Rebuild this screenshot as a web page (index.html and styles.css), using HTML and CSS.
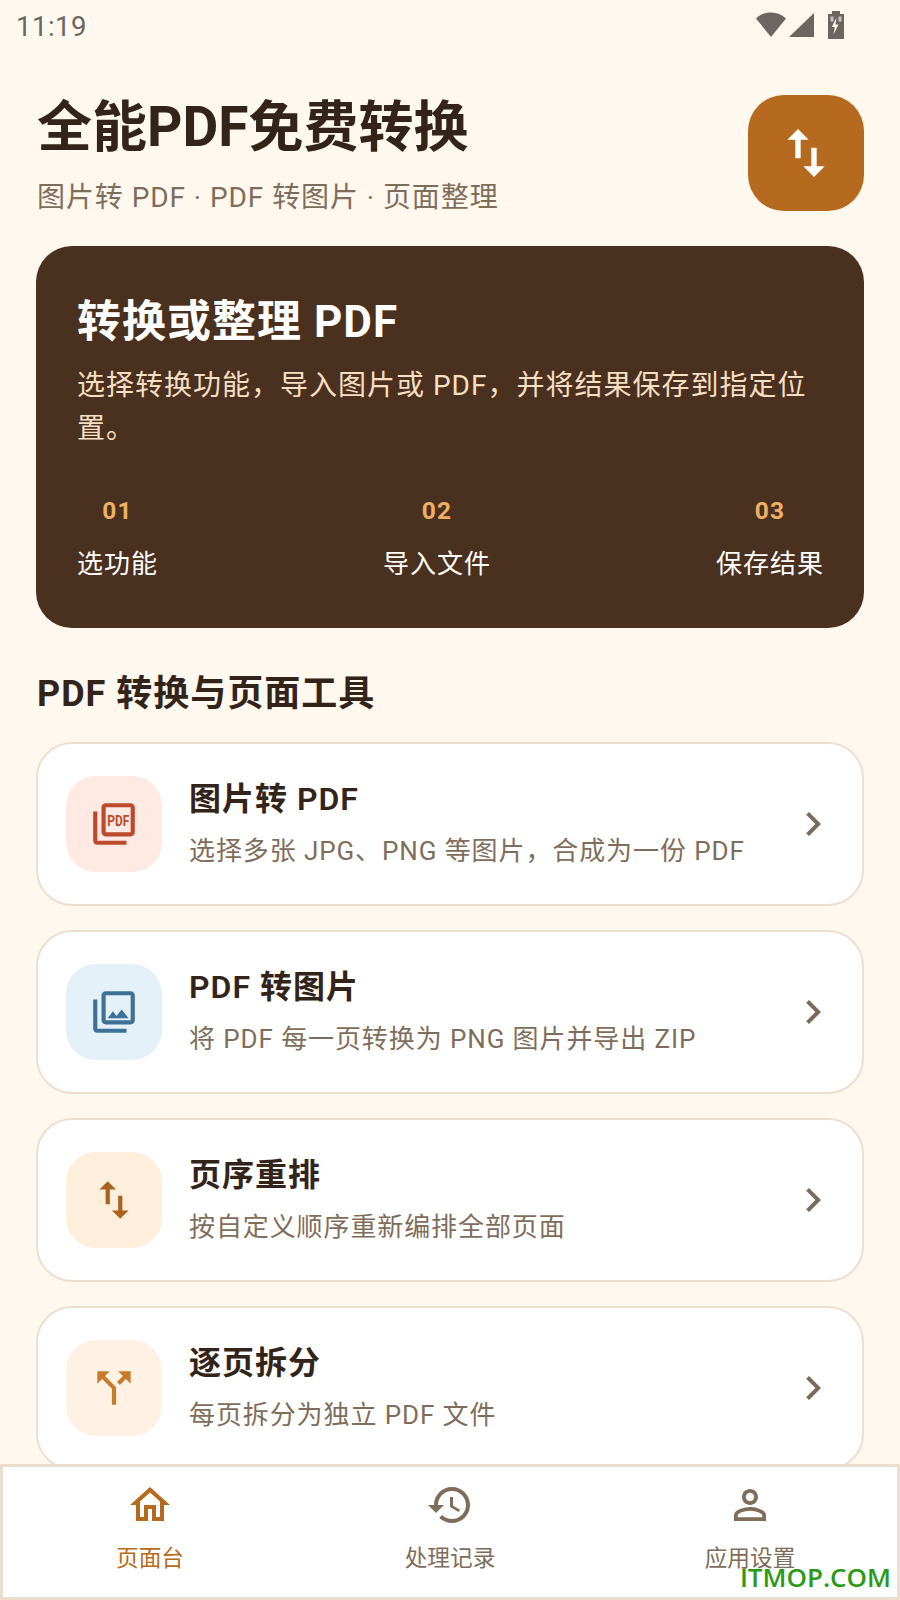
FILE: index.html
```html
<!DOCTYPE html>
<html lang="zh-CN">
<head>
    <meta charset="UTF-8">
    <meta name="viewport" content="width=device-width, initial-scale=1.0">
    <title>全能PDF免费转换</title>
    <link rel="stylesheet" href="styles.css">
</head>
<body>
    <div class="app">
        <!-- Status bar -->
        <div class="status-bar">
            <span class="status-time">11:19</span>
            <svg class="status-icons" viewBox="0 0 90 30" width="90" height="30">
                <path d="M0 9.500C4 5.500 9 3.500 15 3.500s11 2 15 6L15 28z"/>
                <path d="M33 28 58 4v24z"/>
                <path d="M72 5h4V2h8v3h4v25H72z"/>
                <path d="M80.500 8.500 75.800 18h3l-1.300 7.500 5-10h-3z" fill="#fff8ef"/>
                <path d="M74.500 7.500h3v5h-3zM82.500 7.500h3v5h-3z" fill="#c9c4bd"/>
            </svg>
        </div>

        <!-- Header -->
        <header class="page-header">
            <div>
                <h1 class="app-title">全能PDF免费转换</h1>
                <p class="app-subtitle">图片转 PDF · PDF 转图片 · 页面整理</p>
            </div>
            <div class="header-badge">
                <svg viewBox="0 0 24 24" width="64" height="64"><path d="M16 17.010V10h-2v7.010h-3L15 21l4-3.990h-3zM9 3 5 6.990h3V14h2V6.990h3L9 3z"/></svg>
            </div>
        </header>

        <!-- Hero -->
        <section class="hero">
            <h2 class="hero-title">转换或整理 PDF</h2>
            <p class="hero-desc">选择转换功能，导入图片或 PDF，并将结果保存到指定位置。</p>
            <div class="steps">
                <div class="step"><span class="step-num">01</span><span class="step-label">选功能</span></div>
                <div class="step"><span class="step-num">02</span><span class="step-label">导入文件</span></div>
                <div class="step"><span class="step-num">03</span><span class="step-label">保存结果</span></div>
            </div>
        </section>

        <!-- Tools -->
        <main class="tools">
            <h2 class="section-title">PDF 转换与页面工具</h2>

            <div class="tool-card">
                <div class="tool-icon icon-red">
                    <svg viewBox="0 0 24 24" width="50" height="50">
                        <path d="M20 2H8c-1.100 0-2 .9-2 2v12c0 1.100.9 2 2 2h12c1.100 0 2-.9 2-2V4c0-1.100-.9-2-2-2zm0 14H8V4h12v12zM4 6H2v14c0 1.100.9 2 2 2h14v-2H4V6z"/>
                        <text class="pdf-mark" x="14.100" y="12.900" text-anchor="middle" textLength="10.600" lengthAdjust="spacingAndGlyphs">PDF</text>
                    </svg>
                </div>
                <div class="tool-text">
                    <h3 class="tool-name">图片转 PDF</h3>
                    <p class="tool-desc">选择多张 JPG、PNG 等图片，合成为一份 PDF</p>
                </div>
                <svg class="chevron" viewBox="0 0 24 24" width="48" height="48"><path d="M10 6 8.590 7.410 13.170 12l-4.580 4.590L10 18l6-6z"/></svg>
            </div>

            <div class="tool-card">
                <div class="tool-icon icon-blue">
                    <svg viewBox="0 0 24 24" width="50" height="50"><path d="M20 4v12H8V4h12m0-2H8c-1.100 0-2 .9-2 2v12c0 1.100.9 2 2 2h12c1.100 0 2-.9 2-2V4c0-1.100-.9-2-2-2zm-8.500 9.670 1.690 2.260 2.480-3.100L19 15H9zM2 6v14c0 1.100.9 2 2 2h14v-2H4V6H2z"/></svg>
                </div>
                <div class="tool-text">
                    <h3 class="tool-name">PDF 转图片</h3>
                    <p class="tool-desc">将 PDF 每一页转换为 PNG 图片并导出 ZIP</p>
                </div>
                <svg class="chevron" viewBox="0 0 24 24" width="48" height="48"><path d="M10 6 8.590 7.410 13.170 12l-4.580 4.590L10 18l6-6z"/></svg>
            </div>

            <div class="tool-card">
                <div class="tool-icon icon-amber">
                    <svg viewBox="0 0 24 24" width="50" height="50"><path d="M16 17.010V10h-2v7.010h-3L15 21l4-3.990h-3zM9 3 5 6.990h3V14h2V6.990h3L9 3z"/></svg>
                </div>
                <div class="tool-text">
                    <h3 class="tool-name">页序重排</h3>
                    <p class="tool-desc">按自定义顺序重新编排全部页面</p>
                </div>
                <svg class="chevron" viewBox="0 0 24 24" width="48" height="48"><path d="M10 6 8.590 7.410 13.170 12l-4.580 4.590L10 18l6-6z"/></svg>
            </div>

            <div class="tool-card">
                <div class="tool-icon icon-orange">
                    <svg viewBox="0 0 24 24" width="50" height="50"><path d="M14 4l2.290 2.290-2.880 2.880 1.420 1.420 2.880-2.880L20 10V4h-6zm-4 0H4v6l2.290-2.290 4.710 4.700V20h2v-8.410l-5.290-5.300L10 4z"/></svg>
                </div>
                <div class="tool-text">
                    <h3 class="tool-name">逐页拆分</h3>
                    <p class="tool-desc">每页拆分为独立 PDF 文件</p>
                </div>
                <svg class="chevron" viewBox="0 0 24 24" width="48" height="48"><path d="M10 6 8.590 7.410 13.170 12l-4.580 4.590L10 18l6-6z"/></svg>
            </div>
        </main>

        <!-- Bottom nav -->
        <nav class="bottom-nav">
            <div class="nav-item active">
                <svg viewBox="0 0 24 24" width="48" height="48"><path d="M12 5.690l5 4.500V18h-2v-6H9v6H7v-7.810l5-4.500M12 3 2 12h3v8h6v-6h2v6h6v-8h3L12 3z"/></svg>
                <span>页面台</span>
            </div>
            <div class="nav-item">
                <svg viewBox="0 0 24 24" width="48" height="48"><path d="M13 3c-4.970 0-9 4.030-9 9H1l3.890 3.890.07.14L9 12H6c0-3.870 3.130-7 7-7s7 3.130 7 7-3.130 7-7 7c-1.930 0-3.680-.79-4.940-2.060l-1.420 1.420C8.270 19.990 10.510 21 13 21c4.970 0 9-4.030 9-9s-4.030-9-9-9zm-1 5v5l4.280 2.540.72-1.210-3.500-2.080V8H12z"/></svg>
                <span>处理记录</span>
            </div>
            <div class="nav-item">
                <svg viewBox="0 0 24 24" width="48" height="48"><path d="M12 5.900c1.160 0 2.100.94 2.100 2.100s-.94 2.100-2.100 2.100S9.900 9.160 9.900 8s.94-2.100 2.100-2.100m0 9c2.970 0 6.100 1.460 6.100 2.100v1.100H5.900V17c0-.64 3.130-2.100 6.100-2.100M12 4C9.790 4 8 5.790 8 8s1.790 4 4 4 4-1.790 4-4-1.790-4-4-4zm0 9c-2.670 0-8 1.340-8 4v3h16v-3c0-2.660-5.330-4-8-4z"/></svg>
                <span>应用设置</span>
            </div>
            <span class="watermark">ITMOP.COM</span>
        </nav>
    </div>
</body>
</html>
```

FILE: styles.css
```css
* {
    margin: 0;
    padding: 0;
    box-sizing: border-box;
}

body {
    background: #fff8ef;
    font-family: Roboto, "Noto Sans CJK SC", sans-serif;
    color: #33241a;
}

svg {
    display: block;
    fill: currentColor;
}

.app {
    width: 900px;
    height: 1600px;
    display: flex;
    flex-direction: column;
    overflow: hidden;
}

/* Status bar */
.status-bar {
    height: 50px;
    padding: 0 54px 2px 16px;
    display: flex;
    align-items: center;
    justify-content: space-between;
    flex-shrink: 0;
}

.status-time {
    margin-top: 4px;
    font-size: 27.500px;
    letter-spacing: 0.5px;
    color: #6b6660;
}

.status-icons {
    color: #6b6660;
}

/* Header */
.page-header {
    margin-top: 45px;
    padding: 0 36px 0 37px;
    height: 116px;
    display: flex;
    justify-content: space-between;
    align-items: flex-start;
    flex-shrink: 0;
}

.app-title {
    font-size: 55px;
    line-height: 64px;
    font-weight: 700;
}

.app-subtitle {
    margin-top: 19px;
    font-size: 28px;
    line-height: 40px;
    letter-spacing: 0.930px;
    color: #7f6d5c;
}

.header-badge {
    width: 116px;
    height: 116px;
    border-radius: 36px;
    background: #b66a20;
    color: #fff;
    display: flex;
    align-items: center;
    justify-content: center;
}

/* Hero */
.hero {
    margin: 35px 36px 0;
    height: 382px;
    padding: 46px 40px 0 41px;
    border-radius: 36px;
    background: #4a301e;
    color: #fff;
    flex-shrink: 0;
}

.hero-title {
    font-size: 44px;
    line-height: 60px;
    font-weight: 700;
    letter-spacing: 1px;
}

.hero-desc {
    margin-top: 12px;
    font-size: 28px;
    line-height: 43px;
    letter-spacing: 1px;
    color: #f6dfc3;
}

.steps {
    margin-top: 43px;
    display: flex;
    justify-content: space-between;
}

.step {
    display: flex;
    flex-direction: column;
    align-items: center;
    gap: 16px;
}

.step-num {
    font-size: 24.500px;
    line-height: 36px;
    font-weight: 700;
    letter-spacing: 1.200px;
    color: #efb066;
}

.step-label {
    font-size: 26px;
    line-height: 38px;
    letter-spacing: 1px;
}

/* Tools */
.tools {
    flex: 1;
    min-height: 0;
    padding: 0 36px;
    overflow: hidden;
}

.section-title {
    margin: 41px 0 23px 1px;
    font-size: 36px;
    line-height: 50px;
    font-weight: 700;
    letter-spacing: 1px;
}

.tool-card {
    height: 164px;
    margin-bottom: 24px;
    padding: 0 25px 0 28px;
    display: flex;
    align-items: center;
    background: #fff;
    border: 2.500px solid #ecdfcf;
    border-radius: 36px;
}

.tool-icon {
    width: 96px;
    height: 96px;
    border-radius: 30px;
    display: flex;
    align-items: center;
    justify-content: center;
    flex-shrink: 0;
}

.icon-red { background: #ffe9e3; color: #bc4a2c; }
.icon-blue { background: #e5f1f8; color: #3f7096; }
.icon-amber { background: #feefdc; color: #a9631f; }
.icon-orange { background: #fff2e5; color: #c87c2a; }

.pdf-mark {
    font-family: Roboto, sans-serif;
    font-size: 7.200px;
    font-weight: 700;
}

.tool-text {
    flex: 1;
    margin-left: 27px;
    padding-top: 5px;
}

.tool-name {
    margin-top: -6px;
    font-size: 32px;
    line-height: 44px;
    font-weight: 600;
    letter-spacing: 1px;
}

.tool-desc {
    margin-top: 11px;
    font-size: 26px;
    line-height: 38px;
    letter-spacing: 0.900px;
    color: #7f6d5c;
}

.chevron {
    color: #7a6a58;
    flex-shrink: 0;
}

/* Bottom nav */
.bottom-nav {
    position: relative;
    height: 136px;
    flex-shrink: 0;
    display: grid;
    grid-template-columns: repeat(3, 1fr);
    background: #fff;
    box-shadow: inset 0 0 0 3px #ecdfcf;
    color: #7f6d5c;
}

.nav-item {
    padding-top: 17px;
    display: flex;
    flex-direction: column;
    align-items: center;
    gap: 14px;
    font-size: 22.700px;
    line-height: 32px;
}

.nav-item.active {
    color: #b66a20;
}

.watermark {
    position: absolute;
    right: 9px;
    bottom: 7px;
    font-family: "Open Sans", sans-serif;
    font-size: 26px;
    line-height: 32px;
    font-weight: 600;
    color: #2a9a14;
}
```
